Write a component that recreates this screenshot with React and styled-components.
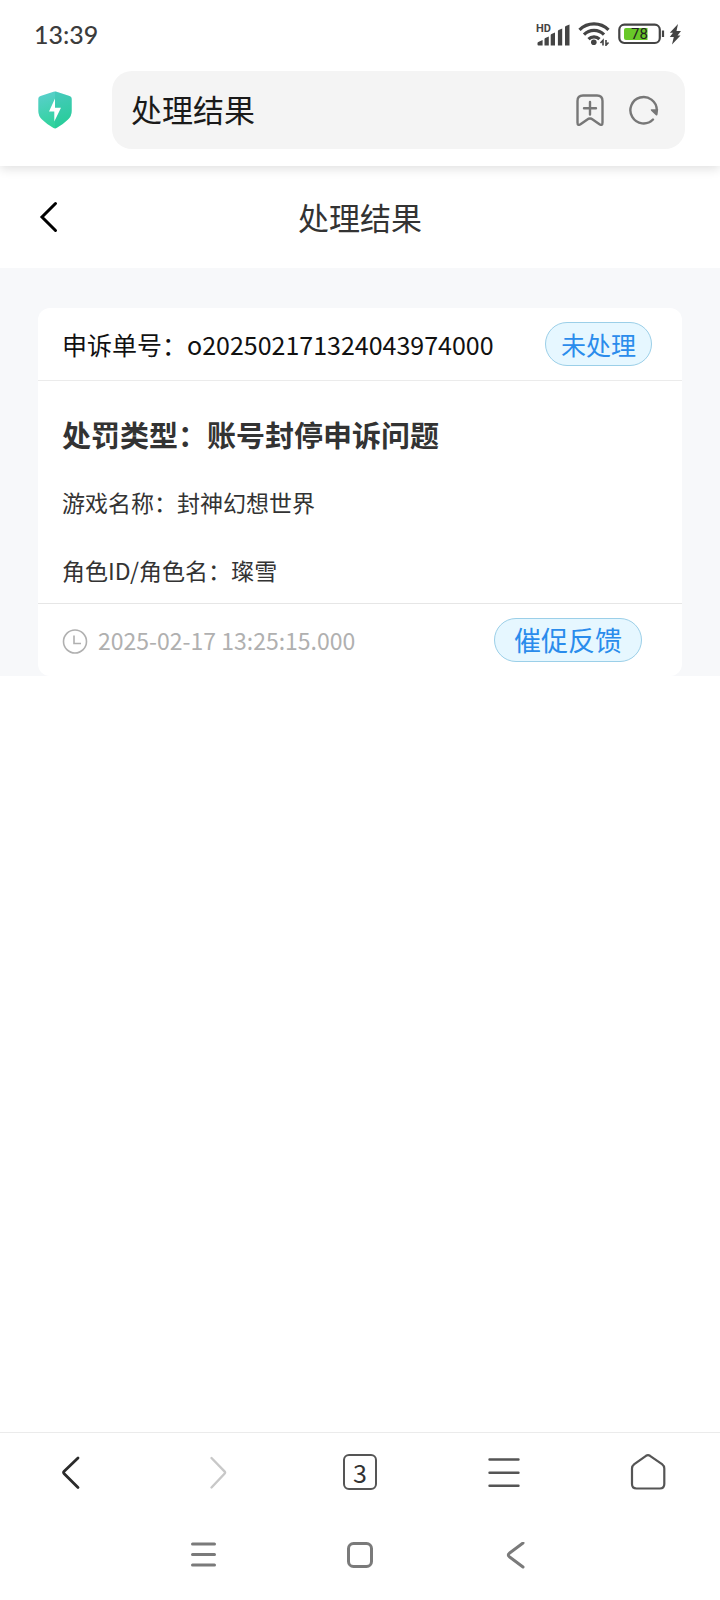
import { useState } from "react";
import styled, { createGlobalStyle } from "styled-components";

const GlobalStyle = createGlobalStyle`
  * {
    box-sizing: border-box;
  }
  body {
    margin: 0;
    background: #fff;
    font-family: "Noto Sans CJK SC", sans-serif;
  }
  svg {
    display: block;
    flex-shrink: 0;
  }
`;

const Page = styled.div`
  display: flex;
  flex-direction: column;
  min-height: 100vh;
`;

const Header = styled.header`
  background: #fff;
  box-shadow: 0 3px 10px rgba(0, 0, 0, 0.12);
`;

const StatusBar = styled.div`
  display: flex;
  align-items: center;
  justify-content: space-between;
  height: 68px;
  padding: 0 38px 0 34px;
`;

const Time = styled.time`
  font-family: Lato, sans-serif;
  font-size: 25px;
  font-weight: 500;
  color: #3c3c3c;
`;

const StatusIcons = styled.div`
  display: flex;
  align-items: center;
  gap: 8px;
`;

const AddressRow = styled.div`
  display: flex;
  align-items: center;
  gap: 40px;
  padding: 3px 35px 17px 38px;
`;

const AddressBar = styled.div`
  display: flex;
  flex: 1;
  align-items: center;
  gap: 25px;
  min-width: 0;
  height: 78px;
  padding: 0 26px 0 19px;
  border-radius: 20px;
  background: #f4f4f4;
`;

const AddressInput = styled.input`
  flex: 1;
  min-width: 0;
  padding: 0 0 2px;
  border: none;
  background: none;
  font-family: inherit;
  font-size: 31px;
  line-height: 44px;
  color: #1a1a1a;
  outline: none;
`;

const IconButton = styled.button`
  display: flex;
  align-items: center;
  justify-content: ${(props) => props.$align || "center"};
  padding: 0;
  border: none;
  background: none;
  color: ${(props) => props.$color || "#777"};
`;

const TitleBar = styled.div`
  display: grid;
  grid-template-columns: 1fr auto 1fr;
  align-items: center;
  height: 102px;
  padding: 0 38px;
`;

const Title = styled.h1`
  margin: 0;
  font-size: 31px;
  font-weight: 400;
  line-height: 44px;
  color: #333;
`;

const Main = styled.main`
  flex: 1;
`;

const List = styled.section`
  padding: 40px 38px 0;
  background: #f7f8fa;
`;

const Card = styled.article`
  border-radius: 12px;
  background: #fff;
`;

const CardHead = styled.div`
  display: flex;
  align-items: center;
  justify-content: space-between;
  height: 73px;
  padding: 0 30px 0 24px;
  border-bottom: 1px solid #ebebeb;
  font-size: 25px;
  color: #111;
`;

const CardBody = styled.div`
  display: flex;
  flex-direction: column;
  gap: 24px;
  padding: 31px 24px 11px;
  color: #333;
`;

const Penalty = styled.h2`
  margin: 0;
  font-size: 29px;
  font-weight: 700;
  line-height: 44px;
`;

const Detail = styled.p`
  margin: 0;
  font-size: 23px;
  line-height: 44px;
`;

const CardFoot = styled.div`
  display: flex;
  align-items: center;
  justify-content: space-between;
  height: 73px;
  padding: 0 40px 0 24px;
  border-top: 1px solid #e6e6e6;
`;

const Stamp = styled.div`
  display: flex;
  align-items: center;
  gap: 10px;
  font-size: 23px;
  color: #b0b0b0;
`;

const Badge = styled.span`
  padding: 0 15px;
  border: 1px solid #9bcfe8;
  border-radius: 22px;
  background: #e6f7ff;
  font-size: 25px;
  line-height: 42px;
  color: #2a8cec;
`;

const UrgeButton = styled.button`
  padding: 0 19px;
  border: 1px solid #9bcfe8;
  border-radius: 22px;
  background: #e6f7ff;
  font-family: inherit;
  font-size: 27px;
  line-height: 42px;
  color: #2a8cec;
`;

const Toolbar = styled.nav`
  display: grid;
  grid-template-columns: repeat(5, 1fr);
  height: 79px;
  border-top: 1px solid #ebebeb;
`;

const TabCount = styled.span`
  width: 34px;
  height: 36px;
  border: 2px solid #555;
  border-radius: 6px;
  font-family: "Noto Sans CJK SC", sans-serif;
  font-size: 25px;
  line-height: 32px;
  text-align: center;
  color: #333;
`;

const SystemBar = styled.div`
  display: flex;
  align-items: center;
  justify-content: center;
  gap: 129px;
  height: 89px;
`;

const stroke = {
  fill: "none",
  stroke: "currentColor",
  strokeLinecap: "round",
  strokeLinejoin: "round",
};

function SignalIcon() {
  return (
    <svg width="34" height="26" viewBox="0 -2 34 26" fill="#444">
      <text x="0" y="9" fontSize="11" fontWeight="700" fontFamily="Roboto, sans-serif">
        HD
      </text>
      <path d="M6.600 17v5.500H2.500q-1 0-1-1v-1.500q0-.8.800-1.100z" />
      <path d="M12.800 13.500v9H8.500v-6.500q0-.8.800-1.100z" />
      <path d="M19 9.500v13h-4.300V12q0-.8.800-1.100z" />
      <path d="M26.200 5.500v17h-4.300V8q0-.8.800-1.100z" />
      <path d="M33.500 1.500v21H29V4q0-.8.800-1.100z" />
    </svg>
  );
}

function WifiIcon() {
  return (
    <svg width="32" height="24" viewBox="0 0 32 24">
      <g fill="none" stroke="#444" strokeWidth="3.200">
        <path d="M1.500 7.800a20.500 20.500 0 0 1 29 0" />
        <path d="M6 12.600a14 14 0 0 1 20 0" />
        <path d="M10.500 17.200a7.800 7.800 0 0 1 11 0" />
      </g>
      <circle cx="15.800" cy="20.200" r="2.800" fill="#444" />
      <path
        d="M25 23.500v-5.200l-2.500 2.700M28 18v5.200l2.500-2.700"
        fill="none"
        stroke="#444"
        strokeWidth="1.600"
      />
    </svg>
  );
}

// battery with the charging bolt to its right
function BatteryIcon() {
  return (
    <svg width="64" height="24" viewBox="0 0 64 24">
      <rect x="1.300" y="2.700" width="40.500" height="18.300" rx="5" fill="none" stroke="#444" strokeWidth="2.200" />
      <path d="M8 6h21.500v12H8a2 2 0 0 1-2-2V8a2 2 0 0 1 2-2z" fill="#68c828" />
      <path d="M45 8.500v6.500" stroke="#444" strokeWidth="2.200" />
      <text
        x="21.500"
        y="17.300"
        textAnchor="middle"
        fontSize="15"
        fontFamily="Roboto, sans-serif"
        fill="#222"
      >
        78
      </text>
      <path
        d="M60 2l-8.200 8.800h3.200L51.800 15h4L54 22.500l8.500-9H59.500L63 9h-4.500z"
        fill="#444"
      />
    </svg>
  );
}

function ShieldIcon() {
  return (
    <svg width="34" height="38" viewBox="0 0 34 38">
      <defs>
        <linearGradient id="shield" x1="0" y1="0" x2="0.3" y2="1">
          <stop offset="0" stopColor="#5ccfcf" />
          <stop offset="1" stopColor="#2fd39b" />
        </linearGradient>
      </defs>
      <path
        d="M15.500.800q1.500-.8 3 0L31.500 5q2.200.7 2.200 2.800V20q0 5-3.700 8.500-4.500 4.500-11.500 8.500-1.500.8-3 0Q8.500 33 4 28.500.3 25 .3 20V7.800Q.3 5.700 2.500 5z"
        fill="url(#shield)"
      />
      <path
        d="M17 .2q.8 0 1.500.6L31.500 5q2.200.7 2.200 2.800V20q0 5-3.700 8.500-4.500 4.500-11.500 8.500-.7.500-1.500.5z"
        fill="#17b59a"
        opacity=".22"
      />
      <path d="M17 7.500 11 20.500h5.300V30.500L23 16.800h-6z" fill="#fff" />
    </svg>
  );
}

function BookmarkIcon() {
  return (
    <svg width="28" height="32" viewBox="0 0 28 32" {...stroke} strokeWidth="2.400">
      <path d="M7 1.500h14q5.500 0 5.500 5.500v21.500q0 3.500-3 1.800l-6.500-4.600q-3-2.200-6 0l-6.500 4.600q-3 1.700-3-1.800V7Q1.500 1.500 7 1.500zM14 8v12.500M8 14.200h12" />
    </svg>
  );
}

function RefreshIcon() {
  return (
    <svg width="30" height="32" viewBox="0 0 30 32">
      <path d="M24 25.500A13.200 13.200 0 1 1 27.800 16" {...stroke} strokeWidth="2.400" />
      <path d="M22.500 15.300h6.700l-.6 5q-.5 2.200-2 .6l-4.500-4.200q-1-1.400.4-1.400z" fill="currentColor" />
    </svg>
  );
}

function TitleBackIcon() {
  return (
    <svg width="20" height="32" viewBox="0 0 20 32" {...stroke} strokeWidth="3">
      <path d="M17.500 2.500 4 16l13.500 13.500" strokeLinejoin="miter" />
    </svg>
  );
}

function ClockIcon() {
  return (
    <svg width="26" height="28" viewBox="0 0 26 28" fill="none" stroke="currentColor" strokeWidth="1.600">
      <circle cx="13" cy="15.500" r="11.500" />
      <path d="M12 9.500v8h7" />
    </svg>
  );
}

const toolPaths = {
  back: <path d="M24 4 10.200 17.300q-1.200 1.200 0 2.400L24 33.500" strokeWidth="2.800" />,
  forward: <path d="M13.500 4l13 13.300q1.200 1.200 0 2.400L13.500 33.500" strokeWidth="2.400" />,
  menu: <path d="M3.500 5.500h29M3.500 18.700h29M3.500 31.700h29" strokeWidth="2.400" />,
  home: (
    <path
      d="M16 1.800q2-1.200 4 0l12 8.400q2.300 1.800 2.300 4.300v15.500q0 4.500-4.500 4.500H6.500Q2 34.500 2 30V14.500q0-2.500 2.300-4.300z"
      strokeWidth="2.200"
    />
  ),
};

const tools = [
  { name: "back", label: "后退", color: "#2b2b2b" },
  { name: "forward", label: "前进", color: "#c8c8c8" },
  { name: "tabs", label: "标签页", color: "#555", count: 3 },
  { name: "menu", label: "菜单", color: "#555" },
  { name: "home", label: "主页", color: "#555" },
];

const systemKeys = [
  { label: "最近任务", path: <path d="M1.500 2h22M1.500 12.500h22M1.500 23h22" /> },
  { label: "桌面", path: <rect x="1.500" y="1.500" width="23" height="23" rx="5" /> },
  { label: "返回", path: <path d="M20 1 6.300 11.300q-2 1.700 0 3.400L20 25" /> },
];

const appeal = {
  id: "o202502171324043974000",
  status: "未处理",
  type: "账号封停申诉问题",
  game: "封神幻想世界",
  role: "璨雪",
  time: "2025-02-17 13:25:15.000",
};

export default function App() {
  const [address, setAddress] = useState("处理结果");

  return (
    <>
      <GlobalStyle />
      <Page>
        <Header>
          <StatusBar>
            <Time>13:39</Time>
            <StatusIcons>
              <SignalIcon />
              <WifiIcon />
              <BatteryIcon />
            </StatusIcons>
          </StatusBar>
          <AddressRow>
            <ShieldIcon />
            <AddressBar>
              <AddressInput
                type="text"
                aria-label="地址栏"
                value={address}
                onChange={(e) => setAddress(e.target.value)}
              />
              <IconButton aria-label="添加书签">
                <BookmarkIcon />
              </IconButton>
              <IconButton aria-label="刷新">
                <RefreshIcon />
              </IconButton>
            </AddressBar>
          </AddressRow>
        </Header>
        <TitleBar>
          <IconButton aria-label="返回" $align="flex-start" $color="#000">
            <TitleBackIcon />
          </IconButton>
          <Title>处理结果</Title>
        </TitleBar>
        <Main>
          <List>
            <Card>
              <CardHead>
                <span>申诉单号：{appeal.id}</span>
                <Badge>{appeal.status}</Badge>
              </CardHead>
              <CardBody>
                <Penalty>处罚类型：{appeal.type}</Penalty>
                <Detail>游戏名称：{appeal.game}</Detail>
                <Detail>角色ID/角色名：{appeal.role}</Detail>
              </CardBody>
              <CardFoot>
                <Stamp>
                  <ClockIcon />
                  <time>{appeal.time}</time>
                </Stamp>
                <UrgeButton>催促反馈</UrgeButton>
              </CardFoot>
            </Card>
          </List>
        </Main>
        <Toolbar>
          {tools.map((tool) => (
            <IconButton key={tool.name} aria-label={tool.label} $color={tool.color}>
              {tool.count ? (
                <TabCount>{tool.count}</TabCount>
              ) : (
                <svg width="36" height="36" viewBox="0 0 36 36" {...stroke}>
                  {toolPaths[tool.name]}
                </svg>
              )}
            </IconButton>
          ))}
        </Toolbar>
        <SystemBar>
          {systemKeys.map((key) => (
            <IconButton key={key.label} aria-label={key.label} $color="#7a7a7a">
              <svg width="27" height="27" viewBox="0 0 27 27" {...stroke} strokeWidth="3">
                {key.path}
              </svg>
            </IconButton>
          ))}
        </SystemBar>
      </Page>
    </>
  );
}
